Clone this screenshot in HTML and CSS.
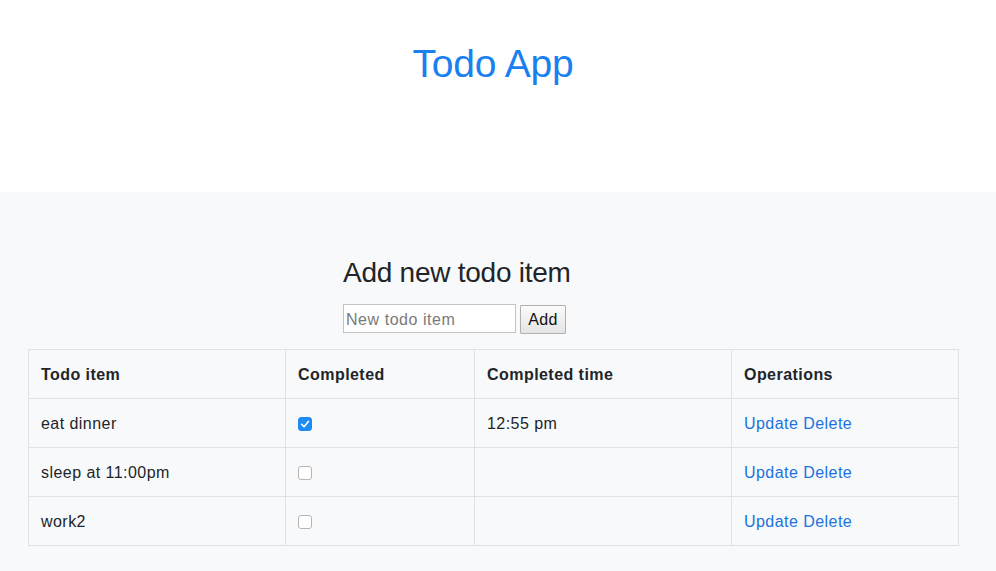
FILE: index.html
```html
<!DOCTYPE html>
<html>
<head>
<meta charset="utf-8">
<link rel="stylesheet" href="styles.css">
</head>
<body>
<header class="top">
  <h1 class="title">Todo App</h1>
</header>
<main class="panel">
  <div class="add-box">
    <h3 class="add-title">Add new todo item</h3>
    <form class="add-form">
      <input class="add-input" type="text" placeholder="New todo item">
      <button class="add-btn" type="button">Add</button>
    </form>
  </div>
  <table class="todo-table">
    <colgroup>
      <col class="c1"><col class="c2"><col class="c3"><col class="c4">
    </colgroup>
    <thead>
      <tr><th>Todo item</th><th>Completed</th><th>Completed time</th><th>Operations</th></tr>
    </thead>
    <tbody>
      <tr>
        <td>eat dinner</td>
        <td><span class="cb checked"><svg viewBox="0 0 14 14" width="14" height="14"><path d="M3.6 7.3 L6 9.7 L10.4 4.4" fill="none" stroke="#fff" stroke-width="1.6" stroke-linecap="round" stroke-linejoin="round"/></svg></span></td>
        <td>12:55 pm</td>
        <td><a class="op" href="#">Update</a> <a class="op" href="#">Delete</a></td>
      </tr>
      <tr>
        <td>sleep at 11:00pm</td>
        <td><span class="cb"></span></td>
        <td></td>
        <td><a class="op" href="#">Update</a> <a class="op" href="#">Delete</a></td>
      </tr>
      <tr>
        <td>work2</td>
        <td><span class="cb"></span></td>
        <td></td>
        <td><a class="op" href="#">Update</a> <a class="op" href="#">Delete</a></td>
      </tr>
    </tbody>
  </table>
</main>
</body>
</html>
```

FILE: styles.css
```css
html, body {
  margin: 0;
  padding: 0;
}
body {
  font-family: "Liberation Sans", Arial, Helvetica, sans-serif;
  font-size: 16px;
  line-height: 1.5;
  color: #212529;
  background: #f8f9fa;
}
.top {
  background: #fff;
  height: 192px;
  box-sizing: border-box;
  padding: 41px 10px 0 0;
}
.title {
  margin: 0;
  text-align: center;
  font-size: 39px;
  font-weight: 300;
  line-height: 1.2;
  letter-spacing: -0.2px;
  color: #1a7ff0;
}
.panel {
  padding: 64px 38px 26px 28px;
}
.add-box {
  width: 310px;
  margin: 0 0 0 315px;
}
.add-title {
  margin: 0 0 14px 0;
  font-size: 28px;
  font-weight: 400;
  line-height: 1.2;
  letter-spacing: -0.25px;
  color: #212529;
}
.add-form {
  display: flex;
  align-items: flex-start;
  gap: 4px;
  margin: 0 0 15px 0;
}
.add-input {
  box-sizing: border-box;
  width: 173px;
  height: 29px;
  margin: 0;
  padding: 3px 2px 0 2px;
  border: 1px solid #c4c4c4;
  background: #fff;
  font-family: "Liberation Sans", Arial, sans-serif;
  font-size: 16px;
  letter-spacing: 0.55px;
  color: #212529;
  outline: none;
}
.add-input::placeholder {
  color: #7a7a7a;
}
.add-btn {
  box-sizing: border-box;
  width: 46px;
  height: 29px;
  margin: 1px 0 0 0;
  padding: 1px 0 0 0;
  border: 1px solid #b0b0b0;
  border-radius: 1px;
  background: linear-gradient(#fbfbfb, #e4e4e4);
  font-family: "Liberation Sans", Arial, sans-serif;
  font-size: 16px;
  letter-spacing: 0.4px;
  color: #111;
}
.todo-table {
  width: 930px;
  border-collapse: collapse;
  table-layout: fixed;
  background: transparent;
}
.c1 { width: 257px; }
.c2 { width: 189px; }
.c3 { width: 257px; }
.c4 { width: 227px; }
.todo-table th,
.todo-table td {
  border: 1px solid #dee2e6;
  padding: 13px 12px 11px 12px;
  height: 24px;
  text-align: left;
  vertical-align: middle;
  letter-spacing: 0.45px;
}
.todo-table th {
  font-weight: 700;
}
.cb {
  display: inline-block;
  box-sizing: border-box;
  width: 14px;
  height: 14px;
  border: 1px solid #b5b5b5;
  border-radius: 3px;
  background: #fff;
  vertical-align: -2px;
}
.cb svg {
  display: block;
  margin: -1px;
}
.cb.checked {
  background: #1d8bf5;
  border-color: #1d8bf5;
}
.op {
  color: #1a73e0;
  text-decoration: none;
}
```
